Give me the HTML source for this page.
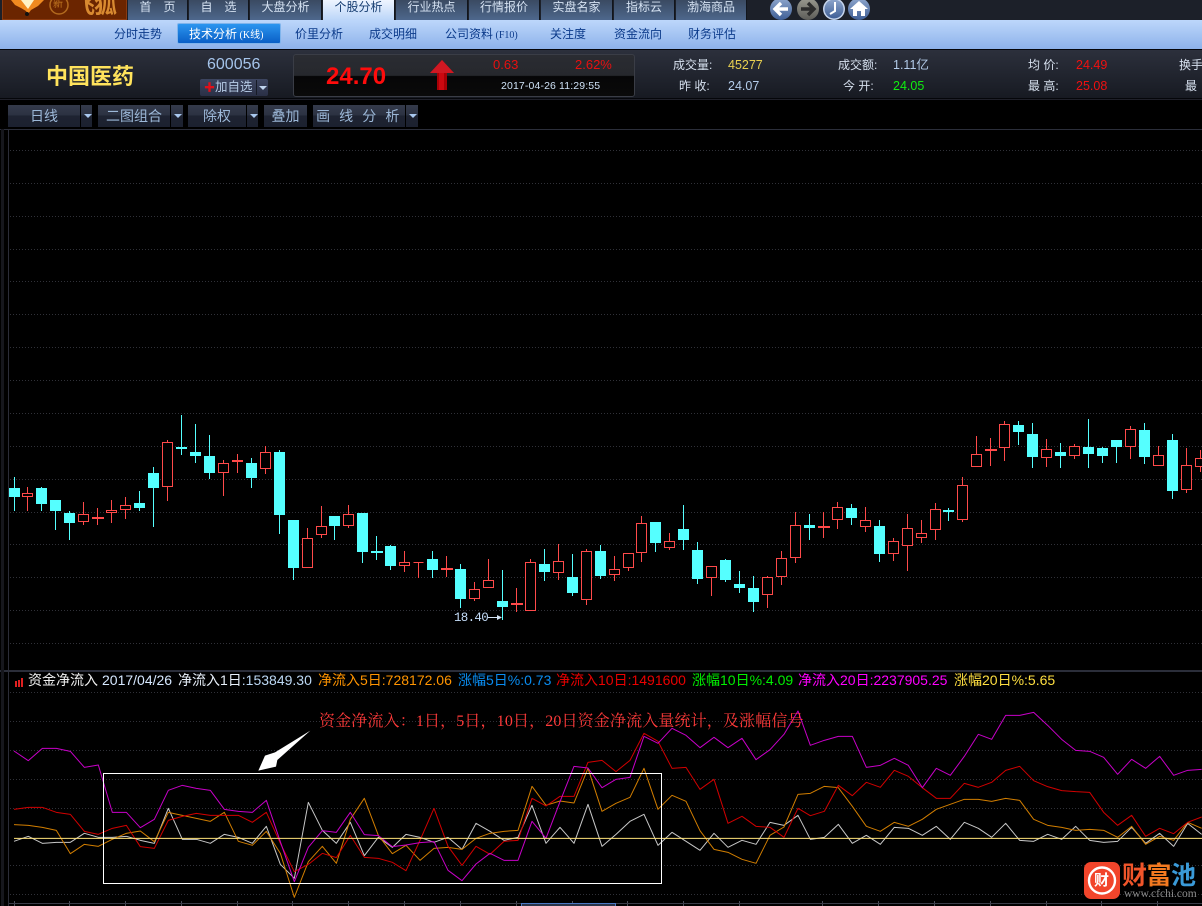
<!DOCTYPE html>
<html lang="zh-CN"><head><meta charset="utf-8"><title>K线</title>
<style>
*{box-sizing:border-box}
html,body{margin:0;padding:0;background:#000;width:1202px;height:906px;overflow:hidden}
body{position:relative;font-family:"Liberation Sans","Noto Sans CJK SC",sans-serif}
.a{position:absolute;white-space:nowrap;line-height:1}
.tab{position:absolute;top:0;height:20px;background:linear-gradient(#3a4a62,#4d678c);color:#d5e2f2;font-size:12px;line-height:14px;text-align:center;border-right:1px solid #11151c}
.tab.on{background:linear-gradient(#eef5ff,#b9d4f8);color:#153c70;height:21px}
.sn{position:absolute;top:27px;font-size:12px;line-height:14px;color:#0b3a8a;white-space:nowrap}
.tb{position:absolute;top:105px;height:22px;background:linear-gradient(#343a4b 0,#2c3242 45%,#1e2331 50%,#1c2130 100%);color:#9cb8d8;font-size:14px;line-height:22px;text-align:center;white-space:nowrap}
.tb.ar:after{content:"";position:absolute;left:3px;top:9px;border:4px solid transparent;border-top:4px solid #a9c8ee;border-bottom:0}
.l{position:absolute;top:673px;font-size:14px;line-height:15px;white-space:nowrap}
.lb{position:absolute;font-size:12px;line-height:12px;color:#d6e0ee;white-space:nowrap}
.v{position:absolute;font-size:12.5px;line-height:12px;white-space:nowrap}
</style></head><body>

<div class="a" style="left:0;top:0;width:1202px;height:20px;background:#1c2029"></div>
<div class="a" style="left:2px;top:0;width:125px;height:20px;background:#6b2500;border:1px solid #8a3a10;border-top:0"></div>
<svg class="a" style="left:0;top:0" width="127" height="20" viewBox="0 0 127 20">
<path d="M11 0H44L38 6 31 10 28 14 26 11 21 8 15 5Z" fill="#f08a20"/>
<path d="M21 0H34L28 9Z" fill="#fff3c8"/><circle cx="27" cy="14" r="2" fill="#111"/>
<circle cx="59" cy="5" r="9" fill="none" stroke="#b26a1e" stroke-width="1.5"/>
</svg>
<div class="a" style="left:53px;top:0;font-size:10px;color:#c47a22">新</div>
<div class="a" style="left:72px;top:-6px;font-size:23px;font-weight:bold;color:#d98a30;letter-spacing:-1px">飞狐</div>

<div class="tab" style="left:128px;width:60px">首　页</div>
<div class="tab" style="left:189px;width:60px">自　选</div>
<div class="tab" style="left:250px;width:72px">大盘分析</div>
<div class="tab on" style="left:323px;width:72px">个股分析</div>
<div class="tab" style="left:396px;width:72px">行业热点</div>
<div class="tab" style="left:469px;width:71px">行情报价</div>
<div class="tab" style="left:541px;width:72px">实盘名家</div>
<div class="tab" style="left:614px;width:61px">指标云</div>
<div class="tab" style="left:676px;width:71px">渤海商品</div>

<svg class="a" style="left:764px;top:0" width="110" height="20" viewBox="0 0 110 20">
<defs><linearGradient id="gb" x1="0" y1="0" x2="0" y2="1"><stop offset="0" stop-color="#8ea6cc"/><stop offset="1" stop-color="#3f5f96"/></linearGradient>
<linearGradient id="gg" x1="0" y1="0" x2="0" y2="1"><stop offset="0" stop-color="#9a9a90"/><stop offset="1" stop-color="#5c5c58"/></linearGradient></defs>
<circle cx="17" cy="9" r="11" fill="url(#gb)"/><path d="M24 9H12M17 3L11 9 17 15" fill="none" stroke="#fff" stroke-width="3.4"/>
<circle cx="44" cy="9" r="11" fill="url(#gg)"/><path d="M37 9H49M44 3L50 9 44 15" fill="none" stroke="#2c2c2c" stroke-width="3.4"/>
<circle cx="70" cy="9" r="11" fill="#c5d4ec"/><circle cx="70" cy="9" r="9.5" fill="url(#gb)"/><path d="M71 2V11L66 14" fill="none" stroke="#fff" stroke-width="2"/>
<circle cx="95" cy="9" r="11" fill="url(#gb)"/><path d="M95 1L86 9H89V16H93V11H97V16H101V9H104Z" fill="#fff"/>
</svg>

<div class="a" style="left:0;top:20px;width:1202px;height:29px;background:linear-gradient(#bdd7fb,#8db2ea)"></div>
<div class="a" style="left:177px;top:23px;width:104px;height:21px;background:linear-gradient(#2b95ef,#0a5fc6);border:1px solid #7fb4ec;border-radius:2px"></div>
<div class="sn" style="left:114px">分时走势</div>
<div class="sn" style="left:189px;color:#fff">技术分析<span style="font-family:'Liberation Serif','Noto Sans CJK SC',serif;font-size:10px"> (K线)</span></div>
<div class="sn" style="left:295px">价里分析</div>
<div class="sn" style="left:369px">成交明细</div>
<div class="sn" style="left:445px">公司资料<span style="font-family:'Liberation Serif',serif;font-size:10px"> (F10)</span></div>
<div class="sn" style="left:550px">关注度</div>
<div class="sn" style="left:614px">资金流向</div>
<div class="sn" style="left:688px">财务评估</div>

<div class="a" style="left:0;top:49px;width:1202px;height:50px;background:linear-gradient(#2c303c,#171a22);border-top:1px solid #05060a;border-bottom:1px solid #05060a"></div>
<div class="a" style="left:46px;top:65px;font-size:22px;font-weight:bold;color:#ffe35c;line-height:23px">中国医药</div>
<div class="a" style="left:207px;top:57px;font-size:16px;color:#a5c4ea">600056</div>
<div class="a" style="left:200px;top:79px;width:68px;height:17px;background:linear-gradient(#3d4560,#2a3046);border-radius:2px"></div>
<div class="a" style="left:204px;top:84px;color:#e0101a;font-size:11px;font-weight:bold;line-height:8px">✚</div>
<div class="a" style="left:215px;top:81px;font-size:12.5px;color:#b6cbe6">加自选</div>
<div class="a" style="left:256px;top:80px;width:1px;height:15px;background:#171b26"></div>
<div class="a" style="left:259px;top:86px;border:4px solid transparent;border-top:4px solid #c0d4ee;border-bottom:0"></div>

<div class="a" style="left:293px;top:54px;width:342px;height:43px;border:1px solid #3a3d46;border-radius:3px;background:linear-gradient(#2a2c32 0,#26282d 50%,#060607 52%,#0a0a0a 100%)"></div>
<div class="a" style="left:326px;top:65px;font-size:24px;font-weight:bold;color:#ff0c0c">24.70</div>
<svg class="a" style="left:429px;top:59px" width="26" height="32" viewBox="0 0 26 32"><path d="M13 1L25 14H18V31H8V14H1Z" fill="#a80006"/><path d="M13 1L25 14H1Z" fill="#d01822"/><path d="M10 14H15V31H10Z" fill="#cc0810"/></svg>
<div class="a" style="left:493px;top:58px;font-size:13px;color:#e81010">0.63</div>
<div class="a" style="left:575px;top:58px;font-size:13px;color:#e81010">2.62%</div>
<div class="a" style="left:501px;top:81px;font-size:10.5px;color:#cfe2f6;letter-spacing:.13px">2017-04-26 11:29:55</div>

<div class="lb" style="left:673px;top:59px">成交量:</div><div class="v" style="left:728px;top:59px;color:#e8d050">45277</div>
<div class="lb" style="left:679px;top:80px">昨 收:</div><div class="v" style="left:728px;top:80px;color:#b4ccea">24.07</div>
<div class="lb" style="left:838px;top:59px">成交额:</div><div class="v" style="left:893px;top:59px;color:#b4ccea">1.11亿</div>
<div class="lb" style="left:843px;top:80px">今 开:</div><div class="v" style="left:893px;top:80px;color:#10ee10">24.05</div>
<div class="lb" style="left:1028px;top:59px">均 价:</div><div class="v" style="left:1076px;top:59px;color:#f01010">24.49</div>
<div class="lb" style="left:1028px;top:80px">最 高:</div><div class="v" style="left:1076px;top:80px;color:#f01010">25.08</div>
<div class="lb" style="left:1179px;top:59px">换手</div>
<div class="lb" style="left:1185px;top:80px">最</div>

<div class="a" style="left:0;top:99px;width:1202px;height:6px;background:#000;border-top:1px solid #1f2029"></div>
<div class="tb" style="left:8px;width:72px">日线</div><div class="tb ar" style="left:81px;width:11px"></div>
<div class="tb" style="left:98px;width:72px">二图组合</div><div class="tb ar" style="left:171px;width:12px"></div>
<div class="tb" style="left:188px;width:58px">除权</div><div class="tb ar" style="left:247px;width:11px"></div>
<div class="tb" style="left:264px;width:43px">叠加</div>
<div class="tb" style="left:313px;width:92px;letter-spacing:2.6px">画 线 分 析</div><div class="tb ar" style="left:406px;width:12px"></div>

<svg class="a" style="left:0;top:0" width="1202" height="906" viewBox="0 0 1202 906">
<g shape-rendering="crispEdges">
<path d="M0 129.5H1202M0 670.5H1202" stroke="#2b2e3a" stroke-width="1"/>
<path d="M0 671.5H1202" stroke="#2b2e3a" stroke-width="1"/>
<path d="M8.5 129V906" stroke="#2b2d38"/>
<path d="M2.5 129V906" stroke="#16171d" stroke-width="3"/>
<path d="M10 150.5H1202M10 183.5H1202M10 216.5H1202M10 249.5H1202M10 281.5H1202M10 314.5H1202M10 347.5H1202M10 380.5H1202M10 413.5H1202M10 446.5H1202M10 479.5H1202M10 512.5H1202M10 544.5H1202M10 577.5H1202M10 610.5H1202M10 643.5H1202M10 692.5H1202M10 721.5H1202M10 750.5H1202M10 779.5H1202M10 808.5H1202M10 865.5H1202M10 894.5H1202" stroke="#303138" stroke-dasharray="1 2"/>

<path stroke="#55ffff" d="M14.5 477V511M41.5 487V511M55.5 500V530M69.5 511V540M139.5 491V511M153.5 467V527M181.5 415V455M195.5 424V463M209.5 435V479M251.5 458V488M279.5 450V534M293.5 520V580M334.5 516V540M362.5 513V563M376.5 536V560M390.5 545V570M432.5 551V578M460.5 564V608M502.5 570V620M544.5 549V581M572.5 554V596M600.5 545V579M655.5 522V552M683.5 505V550M697.5 542V584M725.5 559V582M739.5 571V593M753.5 576V612M809.5 514V540M851.5 504V525M879.5 520V562M948.5 508V521M1018.5 421V445M1032.5 423V468M1060.5 443V468M1088.5 419V468M1102.5 447V463M1116.5 440V463M1144.5 423V464M1172.5 434V499"/>
<path fill="#55ffff" d="M9 488h11v9h-11zM36 488h11v16h-11zM50 500h11v11h-11zM64 513h11v10h-11zM134 503h11v5h-11zM148 473h11v15h-11zM176 447h11v2h-11zM190 452h11v4h-11zM204 456h11v17h-11zM246 463h11v15h-11zM274 452h11v63h-11zM288 520h11v48h-11zM329 516h11v10h-11zM357 513h11v39h-11zM371 551h12v2h-12zM385 546h11v20h-11zM427 559h11v11h-11zM455 569h11v30h-11zM497 601h11v6h-11zM539 564h11v8h-11zM567 577h11v16h-11zM595 551h11v25h-11zM650 522h11v21h-11zM678 529h11v11h-11zM692 550h11v29h-11zM720 560h11v20h-11zM734 584h11v4h-11zM748 588h11v14h-11zM804 525h11v3h-11zM846 508h11v10h-11zM874 526h11v28h-11zM943 510h11v2h-11zM1013 425h11v7h-11zM1027 434h11v23h-11zM1055 452h11v4h-11zM1083 447h11v7h-11zM1097 448h11v8h-11zM1111 440h11v7h-11zM1139 430h11v27h-11zM1167 440h11v51h-11z"/>

<path stroke="#ff4a4a" d="M27.5 487V511M83.5 502V525M97.5 508V525M111.5 500V523M125.5 497V519M167.5 440V501M223.5 460V496M237.5 454V473M265.5 446V474M307.5 528V568M321.5 506V538M348.5 505V528M404.5 551V572M418.5 562V578M446.5 556V577M474.5 582V601M488.5 559V588M516.5 588V612M530.5 559V611M558.5 544V580M586.5 549V605M614.5 556V581M628.5 553V571M641.5 516V562M669.5 533V550M711.5 566V596M767.5 576V608M781.5 551V585M795.5 512V563M823.5 512V538M837.5 502V529M865.5 507V532M893.5 538V561M907.5 514V571M921.5 520V543M935.5 503V540M962.5 477V522M976.5 436V467M990.5 438V466M1004.5 421V461M1046.5 439V467M1074.5 444V459M1130.5 426V459M1158.5 446V466M1186.5 448V493M1200.5 450V472"/>
<path fill="#000" stroke="#ff4a4a" d="M22.5 493.5h10v3h-10zM78.5 514.5h10v7h-10zM92.5 517.5h11v1h-11zM106.5 510.5h10v2h-10zM120.5 505.5h10v4h-10zM162.5 442.5h10v44h-10zM218.5 463.5h10v9h-10zM232.5 460.5h10v1h-10zM260.5 452.5h10v16h-10zM302.5 538.5h10v29h-10zM316.5 526.5h10v8h-10zM343.5 514.5h10v11h-10zM399.5 562.5h10v3h-10zM413.5 562.5h10v0h-10zM441.5 568.5h11v1h-11zM469.5 589.5h10v9h-10zM483.5 580.5h10v7h-10zM511.5 603.5h11v1h-11zM525.5 562.5h10v48h-10zM553.5 561.5h10v11h-10zM581.5 551.5h10v48h-10zM609.5 569.5h10v5h-10zM623.5 553.5h10v14h-10zM636.5 523.5h10v29h-10zM664.5 541.5h10v6h-10zM706.5 566.5h10v11h-10zM762.5 577.5h10v17h-10zM776.5 558.5h10v18h-10zM790.5 525.5h10v32h-10zM818.5 526.5h11v1h-11zM832.5 507.5h10v12h-10zM860.5 520.5h10v6h-10zM888.5 541.5h10v12h-10zM902.5 528.5h10v17h-10zM916.5 533.5h10v4h-10zM930.5 509.5h10v20h-10zM957.5 485.5h10v34h-10zM971.5 454.5h10v12h-10zM985.5 449.5h11v1h-11zM999.5 424.5h10v23h-10zM1041.5 449.5h10v8h-10zM1069.5 446.5h10v9h-10zM1125.5 429.5h10v17h-10zM1153.5 455.5h10v10h-10zM1181.5 465.5h10v24h-10zM1195.5 458.5h10v8h-10z"/>

<path d="M14.5 901V906M69.5 901V906M125.5 901V906M181.5 901V906M237.5 901V906M292.5 901V906M348.5 901V906M404.5 901V906M460.5 901V906M516.5 901V906M572.5 901V906M627.5 901V906M683.5 901V906M739.5 901V906M822.5 901V906M878.5 901V906M934.5 901V906M990.5 901V906M1046.5 901V906M1101.5 901V906M1157.5 901V906" stroke="#4a4c58"/>
<path d="M9 903.5H1202" stroke="#3a3c48"/>
<rect x="521.5" y="903.5" width="94" height="4" fill="#2a3448" stroke="#4a78c4"/>
<path d="M15 681h2v6h-2zM18 680h2v7h-2zM21 678h2v9h-2z" fill="#e02020"/>
</g>

<g transform="translate(0,665) scale(.33333)" fill="none" stroke-width="3" stroke-linejoin="round">
<polyline stroke="#c8c8c8" points="42,529 85,514 127,535 169,532 211,532 253,505 295,517 337,517 379,514 421,526 463,535 505,430 547,523 589,523 631,535 673,508 715,517 757,535 799,484 841,598 883,640 925,412 967,496 1009,535 1051,472 1093,572 1135,517 1177,547 1218,508 1260,517 1302,532 1344,517 1386,553 1428,475 1470,499 1512,526 1554,517 1596,421 1638,535 1680,487 1722,535 1764,418 1806,544 1848,508 1890,469 1932,448 1974,541 2016,502 2058,529 2100,556 2142,505 2184,547 2226,526 2268,538 2310,472 2352,481 2394,451 2431,523 2473,517 2515,478 2557,535 2599,511 2641,538 2683,487 2725,490 2767,511 2809,484 2851,523 2893,472 2935,490 2975,517 3017,475 3059,526 3101,529 3143,508 3185,523 3227,484 3269,526 3311,532 3353,529 3395,487 3437,535 3479,505 3521,544 3563,475 3605,508"/>
<polyline stroke="#d27e00" points="42,479 85,481 127,487 169,496 211,566 253,538 295,544 337,523 379,505 421,498 463,530 505,442 547,451 589,460 631,469 673,442 715,529 757,541 799,499 841,565 883,697 925,590 967,544 1009,595 1051,463 1093,400 1135,511 1177,566 1218,541 1260,586 1302,550 1344,547 1386,553 1428,520 1470,505 1512,499 1554,496 1596,364 1638,421 1680,408 1722,414 1764,310 1806,439 1848,415 1890,397 1932,310 1974,433 2016,391 2058,409 2100,497 2142,553 2184,562 2226,583 2268,595 2310,511 2352,486 2394,388 2431,385 2473,364 2515,368 2557,424 2599,484 2641,499 2683,472 2725,484 2767,463 2809,433 2851,418 2893,403 2935,403 2975,409 3017,400 3059,406 3101,463 3143,481 3185,487 3227,496 3269,493 3311,496 3353,517 3395,484 3437,538 3479,514 3521,526 3563,472 3605,490"/>
<polyline stroke="#d20000" points="42,433 85,427 127,427 169,442 211,448 253,499 295,508 337,490 379,481 421,545 463,550 505,466 547,454 589,445 631,451 673,451 715,451 757,472 799,442 841,535 883,620 925,598 967,565 1009,578 1051,511 1093,577 1135,580 1177,592 1218,617 1260,526 1302,430 1344,544 1386,601 1428,544 1470,568 1512,529 1554,526 1596,400 1638,423 1680,394 1722,394 1764,292 1806,286 1848,320 1890,286 1932,205 1974,229 2016,310 2058,307 2100,373 2142,343 2184,475 2226,454 2268,484 2310,487 2352,517 2394,430 2431,452 2473,439 2515,361 2557,392 2599,352 2641,367 2683,316 2725,334 2767,368 2809,400 2851,400 2893,355 2935,367 2975,352 3017,316 3059,304 3101,347 3143,365 3185,377 3227,380 3269,382 3311,442 3353,481 3395,451 3437,514 3479,490 3521,506 3563,472 3605,456"/>
<polyline stroke="#c800c8" points="42,258 85,287 127,250 169,250 211,259 253,307 295,300 337,442 379,442 421,488 463,463 505,376 547,361 589,370 631,376 673,433 715,439 757,442 799,406 841,530 883,650 925,547 967,497 1009,502 1051,442 1093,509 1135,512 1177,545 1218,540 1260,533 1302,530 1344,616 1386,647 1428,597 1470,565 1512,586 1554,586 1596,469 1638,520 1680,410 1722,304 1764,309 1806,368 1848,343 1890,337 1932,214 1974,235 2016,190 2058,211 2100,248 2142,217 2184,248 2226,220 2268,284 2310,254 2352,208 2394,138 2431,241 2473,226 2515,214 2557,214 2599,307 2641,301 2683,280 2725,301 2767,368 2809,310 2851,331 2893,274 2935,208 2975,223 3017,151 3059,151 3101,142 3143,181 3185,223 3227,256 3269,259 3311,277 3353,328 3395,283 3437,310 3479,274 3521,331 3563,316 3605,313"/>
<path d="M42 520H3606" stroke="#ffe27a"/>
<path d="M931 197L825 262 795 272 775 317 828 305 832 285Z" fill="#fff" stroke="none"/>
</g>
<rect x="103.5" y="773.5" width="558" height="110" fill="none" stroke="#fff" shape-rendering="crispEdges"/>
<path d="M488 617.5H498" stroke="#d5e4f5"/><path d="M497 615L502 617.5 497 620Z" fill="#d5e4f5"/>

<rect x="1084" y="862" width="36" height="37" rx="7" fill="#f2452b"/>
<circle cx="1102" cy="880.5" r="13" fill="none" stroke="#fff" stroke-width="2.4"/>
</svg>

<div class="a" style="left:454px;top:612px;font-family:'Liberation Mono',monospace;font-size:12.5px;color:#c4dcf8;letter-spacing:-.7px">18.40</div>

<div class="l" style="left:28px;color:#f0f0f0">资金净流入</div>
<div class="l" style="left:102px;color:#d6e8ff">2017/04/26</div>
<div class="l" style="left:178px;color:#e8f0fa">净流入1日<span style="color:#bcd8f4">:153849.30</span></div>
<div class="l" style="left:318px;color:#ff9400">净流入5日:728172.06</div>
<div class="l" style="left:458px;color:#0a8cf0">涨幅5日%:0.73</div>
<div class="l" style="left:556px;color:#ea0000">净流入10日:1491600</div>
<div class="l" style="left:692px;color:#00ee00">涨幅10日%:4.09</div>
<div class="l" style="left:798px;color:#ff00ff">净流入20日:2237905.25</div>
<div class="l" style="left:954px;color:#ffdf40">涨幅20日%:5.65</div>

<div class="a" style="left:319px;top:714px;font-family:'Liberation Serif','Noto Serif CJK SC',serif;font-size:16px;letter-spacing:.14px;color:#ff3a3a">资金净流入：1日，5日，10日，20日资金净流入量统计，及涨幅信号</div>

<div class="a" style="left:1094px;top:873px;font-size:15px;font-weight:bold;color:#fff">财</div>
<div class="a" style="left:1122px;top:863px;font-size:25px;font-weight:bold;letter-spacing:-.5px;line-height:27px"><span style="color:#f0552a">财</span><span style="color:#f47a20">富</span><span style="color:#3a9ad8">池</span></div>
<div class="a" style="left:1124px;top:889px;font-family:'Liberation Serif',serif;font-size:11.5px;color:#8c8c8c">www.cfchi.com</div>
</body></html>
